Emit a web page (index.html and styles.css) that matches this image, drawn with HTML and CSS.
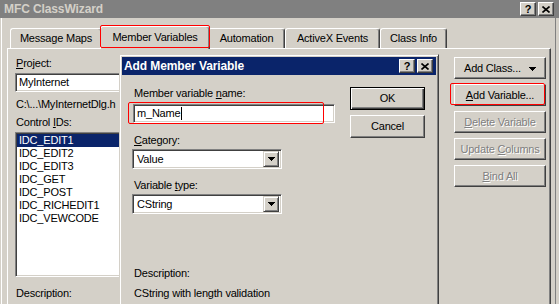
FILE: index.html
```html
<!DOCTYPE html>
<html>
<head>
<meta charset="utf-8">
<title>MFC ClassWizard</title>
<link rel="stylesheet" href="styles.css">
</head>
<body>
<div class="window">
  <div class="titlebar">
    <span class="title">MFC ClassWizard</span>
    <div class="caption-btns">
      <span class="cbtn help">?</span>
      <span class="cbtn"><svg width="8" height="7" viewBox="0 0 8 7"><path d="M0.5 0.5 L7.5 6.5 M7.5 0.5 L0.5 6.5" stroke="#000" stroke-width="1.6" fill="none"/></svg></span>
    </div>
  </div>
  <div class="client">
    <div class="tabs">
      <div class="tab t1">Message Maps</div>
      <div class="tab t2 active">Member Variables</div>
      <div class="tab t3">Automation</div>
      <div class="tab t4">ActiveX Events</div>
      <div class="tab t5">Class Info</div>
    </div>
    <div class="pane">
      <div class="leftcol">
        <div class="label"><u>P</u>roject:</div>
        <div class="combo proj"><span class="val">MyInternet</span></div>
        <div class="path">C:\...\MyInternetDlg.h</div>
        <div class="label ids">Control <u>I</u>Ds:</div>
        <div class="listbox">
          <div class="item sel">IDC_EDIT1</div>
          <div class="item">IDC_EDIT2</div>
          <div class="item">IDC_EDIT3</div>
          <div class="item">IDC_GET</div>
          <div class="item">IDC_POST</div>
          <div class="item">IDC_RICHEDIT1</div>
          <div class="item">IDC_VEWCODE</div>
        </div>
        <div class="label desc">Description:</div>
      </div>
      <div class="rightcol">
        <div class="btn side addclass"><span>Add Class...</span><svg class="arrow" width="7" height="4" viewBox="0 0 7 4"><path d="M0 0h7v1h-1v1h-1v1h-1v1h-1v-1h-1v-1h-1v-1h-1z" fill="#000"/></svg></div>
        <div class="btn side"><span><u>A</u>dd Variable...</span></div>
        <div class="btn side disabled"><span><u>D</u>elete Variable</span></div>
        <div class="btn side disabled"><span>Update <u>C</u>olumns</span></div>
        <div class="btn side disabled"><span><u>B</u>ind All</span></div>
      </div>
    </div>
  </div>

  <div class="dialog">
    <div class="dlg-title">
      <span class="dlg-title-text">Add Member Variable</span>
      <div class="caption-btns">
        <span class="cbtn help">?</span>
        <span class="cbtn"><svg width="8" height="7" viewBox="0 0 8 7"><path d="M0.5 0.5 L7.5 6.5 M7.5 0.5 L0.5 6.5" stroke="#000" stroke-width="1.6" fill="none"/></svg></span>
      </div>
    </div>
    <div class="dlg-body">
      <div class="dlg-left">
        <div class="label l-name">Member variable <u>n</u>ame:</div>
        <div class="edit"><span>m_Name</span><span class="caret"></span></div>
        <div class="label l-cat"><u>C</u>ategory:</div>
        <div class="dcombo"><span class="val">Value</span><span class="ddbtn"><svg width="7" height="4" viewBox="0 0 7 4"><path d="M0 0h7v1h-1v1h-1v1h-1v1h-1v-1h-1v-1h-1v-1h-1z" fill="#000"/></svg></span></div>
        <div class="label l-type">Variable <u>t</u>ype:</div>
        <div class="dcombo"><span class="val">CString</span><span class="ddbtn"><svg width="7" height="4" viewBox="0 0 7 4"><path d="M0 0h7v1h-1v1h-1v1h-1v1h-1v-1h-1v-1h-1v-1h-1z" fill="#000"/></svg></span></div>
        <div class="label l-desc">Description:</div>
        <div class="desc-text">CString with length validation</div>
      </div>
      <div class="dlg-right">
        <div class="btn dlgbtn default">OK</div>
        <div class="btn dlgbtn">Cancel</div>
      </div>
    </div>
  </div>

  <div class="anno anno-tab"></div>
  <div class="anno anno-edit"></div>
  <div class="anno anno-btn"></div>
</div>
</body>
</html>
```
FILE: styles.css
```css
* { box-sizing: border-box; margin: 0; padding: 0; }
html, body { width: 559px; height: 304px; overflow: hidden; }
body {
  background: #d4d0c8;
  font-family: "Liberation Sans", Arial, sans-serif;
  font-size: 11px;
  line-height: 13px;
  letter-spacing: -0.2px;
  color: #000;
}
u { text-decoration: underline; text-underline-offset: 1px; }

.window { position: relative; width: 559px; height: 304px; overflow: hidden; background: #d4d0c8; }

/* title bar */
.titlebar {
  height: 18px;
  background: #808080;
  display: flex;
  align-items: center;
  padding: 0 5px 0 4px;
}
.title { font-weight: bold; font-size: 12px; color: #d4d0c8; letter-spacing: -0.1px; }
.caption-btns { margin-left: auto; display: flex; gap: 2px; }
.cbtn {
  width: 16px; height: 14px;
  background: #d4d0c8;
  border: 1px solid;
  border-color: #fff #404040 #404040 #fff;
  box-shadow: inset -1px -1px #808080;
  display: flex; align-items: center; justify-content: center;
  font-weight: bold; font-size: 11px; line-height: 1; letter-spacing: 0;
}
.cbtn.help { padding-top: 1px; }

/* client area */
.client {
  height: 286px;
  padding-top: 8px;
  box-shadow: inset 1px 0 #d4d0c8, inset 2px 0 #fff, inset -3px 0 #d4d0c8, inset -4px 0 #808080;
}

/* tabs */
.tabs {
  position: relative; z-index: 2;
  display: flex; align-items: flex-end;
  height: 22px;
  padding-left: 10px;
}
.tab {
  height: 20px;
  background: #d4d0c8;
  border: 1px solid;
  border-color: #fff #404040 transparent #fff;
  border-bottom: 0;
  box-shadow: inset -1px 0 #808080;
  border-radius: 3px 3px 0 0;
  display: flex; align-items: center; justify-content: center;
  white-space: nowrap;
}
.t1 { width: 92px; }
.t2 { width: 110px; }
.t3 { width: 77px; }
.t4 { width: 95px; }
.t5 { width: 67px; }
.tab.active {
  height: 23px;
  margin: 0 -2px -1px -2px;
  align-items: flex-start;
  padding-top: 4px;
  position: relative; z-index: 3;
}

/* tab pane */
.pane {
  position: relative; z-index: 1;
  margin-left: 7px;
  width: 544px; height: 270px;
  border: 1px solid;
  border-color: #fff #404040 #404040 #fff;
  box-shadow: inset -1px 0 #808080;
  display: flex;
}
.leftcol { margin-left: 7px; padding-top: 8px; width: 300px; }
.label { white-space: nowrap; padding-left: 1px; }
.combo {
  margin-top: 3px;
  height: 19px; width: 260px;
  background: #fff;
  border: 1px solid;
  border-color: #808080 #fff #fff #808080;
  box-shadow: inset 1px 1px #404040, inset -1px -1px #d4d0c8;
  padding: 2px 0 0 3px;
}
.path { margin-top: 6px; padding-left: 1px; white-space: nowrap; }
.label.ids { margin-top: 5px; }
.listbox {
  margin-top: 3px;
  width: 220px; height: 145px;
  background: #fff;
  border: 1px solid;
  border-color: #808080 #fff #fff #808080;
  box-shadow: inset 1px 1px #404040, inset -1px -1px #d4d0c8;
  padding: 1px;
}
.item { height: 13px; line-height: 13px; padding-left: 2px; white-space: nowrap; }
.item.sel { background: #0a246a; color: #fff; }
.label.desc { margin-top: 10px; }

.rightcol {
  margin-left: auto;
  padding: 8px 4px 0 0;
  display: flex; flex-direction: column; gap: 5px;
}

/* buttons */
.btn {
  background: #d4d0c8;
  border: 1px solid;
  border-color: #fff #404040 #404040 #fff;
  box-shadow: inset -1px -1px #808080;
  display: flex; align-items: center; justify-content: center;
  white-space: nowrap;
}
.btn.side { width: 92px; height: 22px; }
.btn.addclass { justify-content: space-between; padding: 0 9px 0 9px; }
.btn.addclass .arrow { margin-top: 1px; }
.btn.disabled { color: #808080; text-shadow: 1px 1px 0 #fff; }
.btn.disabled u { text-decoration-color: #808080; }

/* dialog */
.dialog {
  position: absolute;
  left: 119px; top: 54px;
  width: 320px; height: 270px;
  background: #d4d0c8;
  border: 1px solid;
  border-color: #d4d0c8 #404040 #404040 #d4d0c8;
  box-shadow: inset 1px 1px #fff, inset -1px -1px #808080;
  padding: 2px;
  z-index: 5;
}
.dlg-title {
  height: 18px;
  background: #0a246a;
  display: flex; align-items: center;
  padding: 0 3px 0 2px;
}
.dlg-title-text { color: #fff; font-weight: bold; font-size: 12px; letter-spacing: -0.1px; }
.dlg-body { display: flex; }
.dlg-left { width: 213px; padding-left: 11px; }
.l-name { margin-top: 12px; }
.edit {
  margin-top: 4px;
  height: 19px; width: 202px;
  background: #fff;
  border: 1px solid;
  border-color: #808080 #fff #fff #808080;
  box-shadow: inset 1px 1px #404040, inset -1px -1px #d4d0c8;
  padding: 2px 0 0 3px;
  display: flex; align-items: flex-start;
}
.caret { width: 1px; height: 13px; background: #000; margin-left: 1px; }
.l-cat { margin-top: 11px; }
.l-type { margin-top: 10px; }
.dcombo {
  margin-top: 2px; margin-left: -1px;
  height: 20px; width: 150px;
  background: #fff;
  border: 1px solid;
  border-color: #808080 #fff #fff #808080;
  box-shadow: inset 1px 1px #404040, inset -1px -1px #d4d0c8;
  padding: 2px 2px 2px 4px;
  display: flex; align-items: center; justify-content: space-between;
}
.dcombo .val { padding-top: 1px; }
.ddbtn {
  width: 16px; height: 16px;
  background: #d4d0c8;
  border: 1px solid;
  border-color: #d4d0c8 #404040 #404040 #d4d0c8;
  box-shadow: inset 1px 1px #fff, inset -1px -1px #808080;
  display: flex; align-items: center; justify-content: center;
}
.l-desc { margin-top: 53px; }
.desc-text { margin-top: 7px; padding-left: 1px; white-space: nowrap; }
.dlg-right {
  margin-left: 15px;
  padding-top: 12px;
  display: flex; flex-direction: column; gap: 5px;
}
.dlgbtn { width: 75px; height: 23px; }
.btn.default {
  border: 1px solid #000;
  box-shadow: inset 1px 1px #fff, inset -1px -1px #404040, inset -2px -2px #808080;
}

/* red annotation outlines */
.anno {
  position: absolute;
  border: 1px solid #ff0000;
  border-radius: 2px;
  z-index: 10;
}
.anno-tab { left: 100px; top: 25px; width: 110px; height: 23px; }
.anno-edit { left: 128px; top: 102px; width: 196px; height: 22px; }
.anno-btn { left: 450px; top: 83px; width: 95px; height: 22px; }
```
